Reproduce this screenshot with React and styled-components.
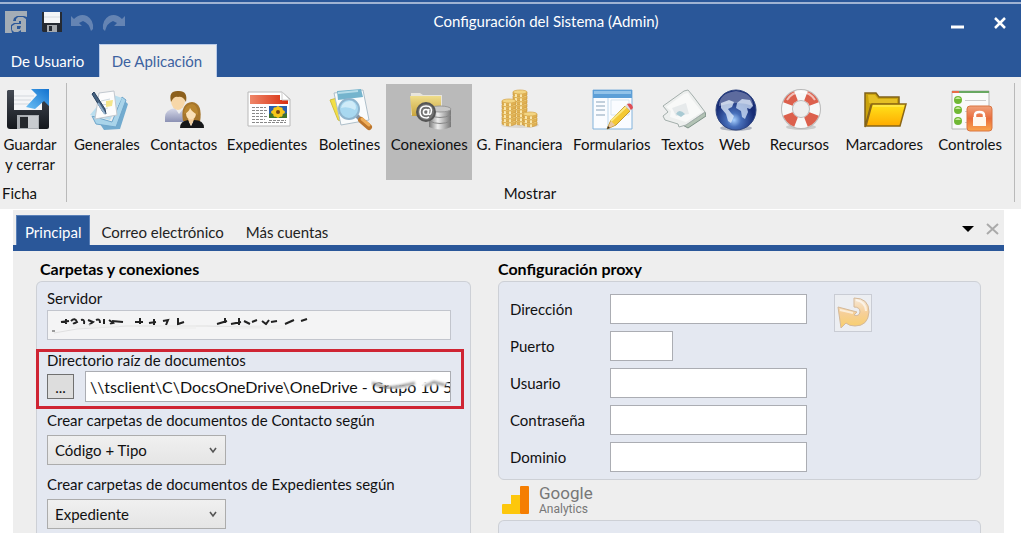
import React from "react";
import styled, { createGlobalStyle } from "styled-components";

const GlobalStyle = createGlobalStyle`
  *, *::before, *::after { box-sizing: border-box; }
  html, body, #root { margin: 0; }
  body { background: #fff; color: #111; font: 15px/16px Lato, "Open Sans", sans-serif; }
  button, input, select { font: inherit; color: inherit; border-radius: 0; margin: 0; }
  svg { display: block; flex: none; }
  h1, h2 { margin: 0; }
`;

const blue = "#2a5799";

const Page = styled.div`
  min-height: 100vh;
  display: flex;
  flex-direction: column;
  overflow: hidden;
`;

/* ---------- window header ---------- */
const Header = styled.header`
  background: ${blue};
  color: #fff;
  padding-top: 2px;
`;
const TitleBar = styled.div`
  display: flex;
  border-top: 2px solid #9fb3d3;
  height: 42px;
`;
const QuickTools = styled.div`
  display: flex;
  align-items: center;
  gap: 8px;
  width: 143px;
  padding: 0 0 4px 4px;
`;
const IconButton = styled.button`
  display: grid;
  place-items: center;
  padding: 0;
  border: 0;
  background: none;
`;
const SaveButton = styled(IconButton)`
  margin-left: 6px;
`;
const Title = styled.h1`
  flex: 1;
  text-align: center;
  font-size: 15px;
  font-weight: 400;
  line-height: 20px;
  padding-top: 7px;
`;
const WindowButtons = styled.div`
  display: flex;
  justify-content: flex-end;
  align-items: center;
  gap: 30px;
  width: 72px;
  padding: 0 15px 3px 0;
`;
const RibbonTabs = styled.nav`
  display: flex;
  height: 33px;
`;
const RibbonTab = styled.button`
  width: ${(p) => (p.$active ? 118 : 99)}px;
  padding: 0 ${(p) => (p.$active ? 2 : 4)}px 0 0;
  border: solid ${(p) => (p.$active ? "#b9cbe8" : "transparent")};
  border-width: 1px 1px 0;
  background: ${(p) => (p.$active ? "#eee" : "transparent")};
  color: ${(p) => (p.$active ? "#3d62a0" : "#fff")};
`;

/* ---------- ribbon ---------- */
const Ribbon = styled.section`
  display: flex;
  background: #eee;
  height: 132px;
  padding: 6px 6px 7px 0;
`;
const Group = styled.div`
  display: flex;
  flex-direction: column;
  justify-content: space-between;
  flex: ${(p) => (p.$wide ? "1" : "0 0 66px")};
  border-right: 1px solid #b9b9b9;
  padding: ${(p) => (p.$wide ? "1px 4px 0 1px" : "1px 6px 0 0")};
`;
const GroupName = styled.span`
  text-align: ${(p) => p.$align || "center"};
  padding: 0 20px 1px 2px;
`;
const Tools = styled.div`
  display: grid;
  grid-template-columns: 78fr 76fr 91fr 74fr 86fr 95fr 90fr 52fr 52fr 78fr 92fr 80fr;
`;
const Tool = styled.button`
  display: flex;
  flex-direction: column;
  align-items: center;
  gap: 2px;
  min-width: 0;
  height: 96px;
  padding: 4px 0 0;
  border: 0;
  background: ${(p) => (p.$active ? "#bababa" : "transparent")};
  line-height: 20px;
  white-space: nowrap;
  svg { margin-left: 3px; }
`;
const SaveTool = styled(Tool)`
  svg { margin-left: 0; margin-right: 4px; }
`;
const SaveLabel = styled.span`
  white-space: normal;
  width: 60px;
`;

/* ---------- document area ---------- */
const Workspace = styled.main`
  flex: 1;
  display: flex;
  flex-direction: column;
  margin: 1px 17px 0 13px;
  background: #eee;
`;
const PageTabs = styled.nav`
  display: flex;
  align-items: stretch;
  height: 41px;
  padding: 5px 5px 0 3px;
  border-bottom: 6px solid ${blue};
`;
const PageTab = styled.button`
  padding: 2px ${(p) => (p.$active ? 8 : 10)}px 0;
  border: 1px solid ${(p) => (p.$active ? "#5a80b8" : "transparent")};
  border-bottom: 0;
  background: ${(p) => (p.$active ? blue : "transparent")};
  color: ${(p) => (p.$active ? "#fff" : "#222")};
`;
const TabActions = styled.div`
  display: flex;
  align-items: center;
  gap: 12px;
  margin-left: auto;
  padding-bottom: 3px;
`;
const Columns = styled.div`
  flex: 1;
  display: grid;
  grid-template-columns: 435fr 483fr;
  gap: 27px;
  padding: 8px 23px 0;
`;
const Column = styled.section`
  display: flex;
  flex-direction: column;
  min-width: 0;
`;
const Heading = styled.h2`
  font-size: 16px;
  font-weight: 700;
  line-height: 20px;
  color: #000;
  padding: 0 0 2px ${(p) => p.$indent || 0}px;
`;
const Panel = styled.div`
  background: #e4e8f1;
  border: 1px solid #cdd0d6;
  border-radius: 6px;
  ${(p) => p.$open && "border-bottom: 0; border-radius: 6px 6px 0 0; flex: 1;"}
`;
const FolderPanel = styled(Panel)`
  padding: 8px 19px 4px 10px;
`;
const Field = styled.div`
  display: flex;
  flex-direction: column;
  gap: ${(p) => p.$gap || 7}px;
  margin-bottom: ${(p) => p.$after || 0}px;
`;
const Highlight = styled(Field)`
  margin: 0 -13px 3px -11px;
  padding: 0 10px 4px 8px;
  border: 3px solid #cf2433;
`;
const InputHolder = styled.div`
  position: relative;
  flex: 1;
  display: flex;
`;
const TextInput = styled.input`
  width: ${(p) => (p.$short ? "63px" : "100%")};
  min-width: 0;
  height: ${(p) => (p.$tall ? 31 : 30)}px;
  padding: 0 0 0 4px;
  border: 1px solid ${(p) => (p.$muted ? "#c2c5cd" : "#abadb3")};
  background: ${(p) => (p.$muted ? "#f4f4f5" : "#fff")};
  font-size: ${(p) => (p.$tall ? 16 : 15)}px;
  line-height: 20px;
`;
const Smudge = styled.svg`
  position: absolute;
  left: ${(p) => p.$left}px;
  top: 3px;
`;
const PathRow = styled.div`
  display: flex;
  align-items: center;
  gap: 11px;
`;
const BrowseButton = styled.button`
  width: 27px;
  height: 25px;
  padding: 0;
  border: 1px solid #707070;
  background: #ddd;
`;
const SelectHolder = styled.div`
  position: relative;
  width: 179px;
  svg { position: absolute; right: 9px; top: 12px; pointer-events: none; }
`;
const Select = styled.select`
  appearance: none;
  width: 100%;
  height: 30px;
  padding: 0 24px 0 7px;
  border: 1px solid #acacac;
  background: linear-gradient(#f0f0f0, #e5e5e5);
  line-height: 22px;
`;
const ProxyPanel = styled(Panel)`
  display: flex;
  align-items: flex-start;
  gap: 27px;
  padding: 12px 11px 7px;
`;
const ProxyFields = styled.div`
  display: flex;
  flex-direction: column;
  gap: 7px;
  width: 297px;
`;
const ProxyRow = styled.div`
  display: grid;
  grid-template-columns: 100px 1fr;
  align-items: center;
`;
const ResetButton = styled.button`
  display: grid;
  place-items: center;
  width: 38px;
  height: 38px;
  padding: 0;
  border: 1px solid #c9ccd4;
  background: #eceef2;
`;
const Analytics = styled.div`
  display: flex;
  align-items: center;
  gap: 10px;
  height: 40px;
  padding-left: 4px;
  color: #777;
  font-family: Roboto, sans-serif;
`;
const Brand = styled.div`
  display: flex;
  flex-direction: column;
  font-size: 12px;
  line-height: 14px;
`;
const BrandName = styled.span`
  font-size: 17px;
  line-height: 18px;
`;

/* ---------- icons ---------- */
const Ico = ({ children }) => (
  <svg width="44" height="44" viewBox="0 0 44 44" aria-hidden="true">{children}</svg>
);

const SaveCloseIcon = () => (
  <Ico>
    <defs>
      <linearGradient id="sv" x1="0" y1="0" x2="0" y2="1"><stop offset="0" stopColor="#454b55" /><stop offset="1" stopColor="#14171c" /></linearGradient>
      <linearGradient id="ar" x1="0" y1="1" x2="1" y2="0"><stop offset="0" stopColor="#6cc0f5" /><stop offset="1" stopColor="#1272cf" /></linearGradient>
    </defs>
    <path d="M2 2H41Q43 2 43 4V39Q43 41 41 41H4Q1 41 1 38V3Z" fill="url(#sv)" />
    <path d="M8 2H36V22H8Z" fill="#f4f5f7" />
    <path d="M8 8H28M8 12H25M8 16H34" stroke="#d3d7dd" />
    <path d="M11 27H33V41H11Z" fill="#a9adb2" /><path d="M14 29H22V40H14Z" fill="#25282d" /><path d="M22 28H32V40H22Z" fill="#c8cbcf" />
    <path d="M20 19L31 7L25 1H43V18L38 13L29 21Z" fill="url(#ar)" />
  </Ico>
);
const GeneralIcon = () => (
  <Ico>
    <path d="M12 33L28 37L39 13L42 16L34 41L18 42Z" fill="#72abcf" />
    <path d="M6 28L26 34L36 9L40 12L30 39L10 36Z" fill="#a9d4ea" stroke="#6fa6cb" />
    <path d="M4 27L24 32L36 10L22 5Z" fill="#b9deef" />
    <path d="M13 5L28 3L31 27L9 31Z" fill="#fcfcfc" stroke="#c2c8cf" />
    <path d="M15 13L24 11M15 17L24 16M15 21L22 20" stroke="#ccd7df" />
    <path d="M20 13L27 12L26 18L20 19Z" fill="#f4e58a" />
    <path d="M6 6L17 24L20 26L19 21L8 4Z" fill="#45617f" stroke="#263f5d" />
    <path d="M12 15L19 26" stroke="#93b1cd" strokeWidth="2" />
  </Ico>
);
const ContactsIcon = () => (
  <Ico>
    <defs><linearGradient id="shirt" x1="0" y1="0" x2="0" y2="1"><stop stopColor="#d8dbea" /><stop offset="1" stopColor="#8b91b4" /></linearGradient></defs>
    <path d="M2 34V29Q2 22 12 20L16 26L21 20Q28 21 29 27V34Z" fill="url(#shirt)" />
    <ellipse cx="15" cy="13" rx="7" ry="9" fill="#f7d7a8" />
    <path d="M8 14Q5 2 16 3Q25 3 23 14Q20 8 15 9Q11 8 8 14Z" fill="#8c601d" />
    <path d="M20 33Q17 15 29 14Q40 15 37 34Z" fill="#a6762c" />
    <ellipse cx="28" cy="25" rx="5" ry="7" fill="#fae0b6" />
    <path d="M21 26Q21 17 29 16Q35 17 35 27Q29 24 27 20Q26 24 21 26Z" fill="#b98630" />
    <path d="M17 40Q17 33 25 32L28 38L31 32Q41 32 41 40Z" fill="#17181a" />
    <path d="M25 31L28 38L31 31Z" fill="#f6d2a1" />
  </Ico>
);
const RecordsIcon = () => (
  <Ico>
    <defs><linearGradient id="rd" x1="0" y1="0" x2="1" y2="0"><stop stopColor="#ef8668" /><stop offset="1" stopColor="#d82e10" /></linearGradient></defs>
    <path d="M1 4H35L43 11V38H1Z" fill="#fff" stroke="#b8b8b8" />
    <path d="M3 7H33V12H41V16H3Z" fill="url(#rd)" /><path d="M35 4V12H43Z" fill="#fff" stroke="#ccc" />
    <path d="M5 19.5H19M5 22.5H20M5 25.5H18M5 28.5H20M5 31.5H18M5 34.5H39M22 32.5H39" stroke="#888" strokeDasharray="3 1" />
    <path d="M22 18H40V30H22Z" fill="#285fae" /><path d="M22 26L28 24L34 27L40 25V30H22Z" fill="#42752b" />
    <g fill="#f6c719"><ellipse cx="31" cy="24" rx="7" ry="3" /><ellipse cx="31" cy="24" rx="3" ry="6" /><ellipse cx="31" cy="24" rx="6" ry="3" transform="rotate(45 31 24)" /><ellipse cx="31" cy="24" rx="6" ry="3" transform="rotate(-45 31 24)" /></g><circle cx="31" cy="24" r="2" fill="#774814" />
  </Ico>
);
const BulletinsIcon = () => (
  <Ico>
    <path d="M1 12L8 10L17 35L9 32Z" fill="#f2df46" stroke="#d1bf42" />
    <path d="M5 5L34 2L40 32L12 37Z" fill="#f9fbfc" stroke="#aebfca" />
    <path d="M8 3L32 1L34 9L9 12Z" fill="#75b4cd" /><path d="M9 5L29 3" stroke="#b6dce9" strokeWidth="2" />
    <path d="M27 27L33 33" stroke="#8a94a0" strokeWidth="4" />
    <path d="M32 32L40 39" stroke="#bd762c" strokeWidth="6" strokeLinecap="round" /><path d="M33 31L40 37" stroke="#efae5a" strokeWidth="3" strokeLinecap="round" />
    <circle cx="20" cy="21" r="10" fill="#a8d8f0" stroke="#8fb4cd" strokeWidth="2" />
    <path d="M12 20Q14 12 23 13Q29 17 26 22Q19 18 12 20Z" fill="#d8f0fa" opacity=".8" />
  </Ico>
);
const ConnectionsIcon = () => (
  <Ico>
    <defs>
      <linearGradient id="cf" x1="0" y1="0" x2="0" y2="1"><stop stopColor="#efdd8b" /><stop offset="1" stopColor="#caa53d" /></linearGradient>
      <linearGradient id="db"><stop stopColor="#777" /><stop offset=".4" stopColor="#eee" /><stop offset="1" stopColor="#777" /></linearGradient>
    </defs>
    <path d="M2 5H11L14 7H33V27H2Z" fill="#e8e5dc" /><path d="M1 8H32V28H3Z" fill="url(#cf)" />
    <path d="M20 21V39Q31 44 42 39V21Z" fill="url(#db)" /><ellipse cx="31" cy="21" rx="11" ry="3" fill="#c7c7c7" stroke="#999" />
    <path d="M20 27Q31 32 42 27M20 33Q31 38 42 33" fill="none" stroke="#888" />
    <circle cx="17" cy="24" r="9" fill="#737373" stroke="#555" strokeWidth="2" />
    <g fill="none" stroke="#fff" strokeWidth="1.5"><circle cx="17" cy="24" r="2.6" /><path d="M20 21L19 25Q20 28 22 25Q24 18 17 18Q11 18 11 24Q11 30 18 30L20 29" /></g>
  </Ico>
);
const Coins = ({ x, y, n }) => (
  <g>{Array.from({ length: n }, (_, i) => (
    <g key={i}><path d={`M${x} ${y + (n - i - 1) * 4}v3q7 4 14 0v-3Z`} fill="#e0b152" stroke="#c8943a" strokeWidth=".6" /><path d={`M${x + 3} ${y + (n - i) * 4 - 2}v3M${x + 8} ${y + (n - i) * 4 - 2}v3`} stroke="#f9e7ae" strokeWidth="2" /><ellipse cx={x + 7} cy={y + (n - i - 1) * 4} rx="7" ry="2" fill="#f3d583" stroke="#d6a548" strokeWidth=".7" /></g>
  ))}</g>
);
const FinanceIcon = () => (
  <Ico><ellipse cx="21" cy="37" rx="19" ry="3" fill="#c9c2b4" opacity=".5" /><Coins x={14} y={4} n={8} /><Coins x={3} y={13} n={6} /><Coins x={24} y={26} n={3} /></Ico>
);
const FormsIcon = () => (
  <Ico>
    <path d="M2 2H41V41H2Z" fill="#fafcff" stroke="#82b3dc" /><path d="M2 2H41V10H2Z" fill="#5d9fd7" /><path d="M3 3H40V6H3Z" fill="#93c3e9" />
    <path d="M17 10V40" stroke="#bcd6eb" /><path d="M20 12H38V27H20Z" fill="none" stroke="#d8e5f0" />
    <path d="M5 14H14M5 18H14M5 22H14M5 27H14" stroke="#8aa3b9" />
    <path d="M16 41L20 32L34 18L39 23L25 37Z" fill="#f4c934" stroke="#c3992e" /><path d="M20 33L35 19" stroke="#fbe985" strokeWidth="2" />
    <path d="M34 18L37 15L42 20L39 23Z" fill="#dedede" /><path d="M36 16Q41 14 42 20L40 22Z" fill="#df4d55" />
    <path d="M16 41L20 33L24 37Z" fill="#eac7a0" /><path d="M16 41L17 38L19 40Z" fill="#33291f" />
  </Ico>
);
const TextsIcon = () => (
  <Ico>
    <path d="M17 35L26 40L44 28L43 24L25 36Z" fill="#b2c2b4" stroke="#7d9187" />
    <path d="M1 18L22 3L26 2L31 8L43 24L24 37L17 39L16 36L3 32L1 28L6 24Z" fill="#edefee" stroke="#a3aeab" />
    <path d="M4 19L22 6L26 5L29 10L40 24L24 34L8 29L9 23Z" fill="#f8f9f8" />
    <path d="M10 20L24 15L27 26L14 28Z" fill="#e6eaeb" /><path d="M14 26Q17 20 23 26L19 29Z" fill="#a8cad3" />
  </Ico>
);
const WebIcon = () => (
  <Ico>
    <defs><radialGradient id="wb" cx=".45" cy=".75"><stop stopColor="#a7d0ff" /><stop offset=".35" stopColor="#476fba" /><stop offset="1" stopColor="#172c75" /></radialGradient></defs>
    <ellipse cx="22" cy="40" rx="16" ry="3" fill="#aeb4c0" />
    <circle cx="22" cy="22" r="20" fill="url(#wb)" stroke="#304680" />
    <path d="M7 15L15 12L20 14L18 19L14 21L17 25L20 28L17 35L14 33L12 26L7 20Z" fill="#dbe7f8" opacity=".8" />
    <path d="M23 15L28 11L36 12L39 18L36 21L33 20L34 24L31 31L28 29L27 23L22 20Z" fill="#cbdcf5" opacity=".8" />
    <path d="M5 18Q5 5 22 3Q39 5 39 18Q24 12 5 18Z" fill="#fff" opacity=".3" />
  </Ico>
);
const ResourcesIcon = () => (
  <Ico>
    <ellipse cx="22" cy="39" rx="15" ry="3" fill="#ccc" />
    <circle cx="22" cy="21" r="14" fill="none" stroke="#b9b9b9" strokeWidth="12" /><circle cx="22" cy="21" r="14" fill="none" stroke="#f7f7f7" strokeWidth="10" />
    <g fill="none" stroke="#dc604d" strokeWidth="10"><path d="M8.9 16A14 14 0 0 1 17 7.9M27 7.9A14 14 0 0 1 35.1 16M35.1 26A14 14 0 0 1 27 34.1M17 34.1A14 14 0 0 1 8.9 26" /></g>
    <path d="M8 12Q13 4 22 4Q31 4 36 12" fill="none" stroke="#fff" strokeWidth="2" opacity=".6" />
  </Ico>
);
const BookmarksIcon = () => (
  <Ico>
    <defs><linearGradient id="bk" x1="0" y1="0" x2="0" y2="1"><stop stopColor="#ffe41c" /><stop offset="1" stopColor="#ffab00" /></linearGradient></defs>
    <path d="M1 39V5H12L15 9H35V17H7Z" fill="#cba30b" stroke="#80621b" strokeWidth="1.5" />
    <path d="M4 7H11L14 11H33V15H5Z" fill="#e5bf25" />
    <path d="M8 16H42L36 38H2Z" fill="url(#bk)" stroke="#8b6717" strokeWidth="1.5" /><path d="M9 18H40" stroke="#fff06d" />
  </Ico>
);
const ControlsIcon = () => (
  <Ico>
    <defs><linearGradient id="lk" x1="0" y1="0" x2="0" y2="1"><stop stopColor="#f0a27c" /><stop offset=".5" stopColor="#e96d3c" /><stop offset="1" stopColor="#faa64b" /></linearGradient></defs>
    <path d="M2 3H39V41H2Z" fill="#fafafa" stroke="#b7b7b7" /><path d="M2 3H39V5H2Z" fill="#69a862" /><path d="M2 3H9V5H2Z" fill="#e86c48" />
    <path d="M15 12.5H36M15 23.5H30M15 34.5H30" stroke="#ccc" />
    {[12, 22, 33].map((y) => <g key={y}><circle cx="8" cy={y} r="4" fill="#70b834" /><path d={`M5 ${y - 1}Q8 ${y - 5} 11 ${y - 1}Z`} fill="#c5e998" /></g>)}
    <rect x="17" y="18" width="25" height="25" rx="3" fill="url(#lk)" stroke="#da7442" />
    <path d="M25 29V27Q25 24 29.500 24Q34 24 34 27V29" fill="none" stroke="#fff" strokeWidth="2.500" /><path d="M23 29H36V38H23Z" fill="#fff8ed" />
  </Ico>
);

const AppLogo = () => (
  <svg width="23" height="23" viewBox="0 0 23 23" aria-hidden="true">
    <path d="M1 0H23V6L20 5H13L10 7L9 10H15V12H10L7 14V18L8 22H1Z" fill="#a4adb6" />
    <path d="M12 8L14 6H19L22 8V21H17V19L14 21H10L8 19V15L11 13H17V10H12ZM13 15V18H16L17 15Z" fill="#a4adb6" fillRule="evenodd" />
  </svg>
);
const SmallSaveIcon = () => (
  <svg width="22" height="22" viewBox="0 0 22 22" aria-hidden="true">
    <path d="M1 1H21V21H2L1 20Z" fill="#252a32" /><path d="M3 1H19V12H3Z" fill="#f3f5f7" /><path d="M3 6H19" stroke="#d5dae0" /><path d="M6 14H16V21H6Z" fill="#a5a9ae" /><path d="M8 15H11V20H8Z" fill="#252a32" />
  </svg>
);
const UndoIcon = ({ flip }) => (
  <svg width="23" height="20" viewBox="0 0 23 20" aria-hidden="true">
    <path transform={flip ? "translate(23 0) scale(-1 1)" : undefined} d="M0 14V4L3 7Q9 1 16 4Q23 8 22 17L20 19Q18 11 12 9L8 11L11 14Z" fill="#6584b3" />
  </svg>
);
const Chevron = () => (
  <svg width="8" height="7" viewBox="0 0 8 7" aria-hidden="true"><path d="M1 1L4 5L7 1" fill="none" stroke="#555" strokeWidth="1.6" /></svg>
);
const ResetIcon = () => (
  <svg width="34" height="32" viewBox="0 0 34 32" aria-hidden="true">
    <defs><linearGradient id="rs" x1="0" y1="0" x2="0" y2="1"><stop stopColor="#f6e9d8" /><stop offset=".5" stopColor="#f6cf98" /><stop offset="1" stopColor="#f8cf6b" /></linearGradient></defs>
    <path d="M18 1Q33 1 33 15Q32 29 19 29Q13 29 10 26L5 31L2 10L21 15L18 18Q23 20 24 15Q24 10 18 10Z" fill="url(#rs)" stroke="#d4b99a" />
    <path d="M4 13L17 16M20 3Q30 5 30 14" fill="none" stroke="#fff" opacity=".6" strokeWidth="2" />
  </svg>
);
const AnalyticsLogo = () => (
  <svg width="27" height="28" viewBox="0 0 27 28" aria-hidden="true">
    <path d="M1 18H9V9H18V28H1Q0 28 0 27V19Q0 18 1 18Z" fill="#fdc70c" /><rect x="18" width="9" height="28" rx="1" fill="#f57e02" />
  </svg>
);
const ServerSmudge = () => (
  <Smudge $left={4} width="264" height="23" viewBox="0 0 264 23" aria-hidden="true">
    <defs><filter id="soft"><feGaussianBlur stdDeviation=".7" /></filter></defs>
    <g fill="none" stroke="#222" strokeWidth="2" filter="url(#soft)">
      <path d="M10 9L18 8M15 6V11M20 8Q24 4 26 9L22 11M30 7Q34 6 33 11M37 7L42 9L38 12M45 7Q49 5 49 10M53 6V11M58 7L62 10L59 11M61 8L72 9" />
      <path d="M84 9H92M89 5V11M98 10L105 9M103 6V12M112 8L117 7L115 12M127 5V11L133 9" />
      <path d="M166 11L176 8M174 5V10M180 11L190 9M188 5V12M193 8L199 11M201 9L206 7M211 8L215 11L218 7M220 9L226 8M234 11L243 7M250 8L256 6" />
    </g>
    <path d="M3 20L26 16L75 13H155L210 14" fill="none" stroke="#ccc" opacity=".5" /><path d="M1 18L4 18" stroke="#444" />
    <path d="M18 13H68M110 14H145M180 14H235" stroke="#eee" strokeWidth="4" opacity=".6" />
  </Smudge>
);
const PathSmudge = () => (
  <Smudge $left={286} width="78" height="25" viewBox="0 0 78 25" aria-hidden="true">
    <defs><filter id="soft2"><feGaussianBlur stdDeviation="1.2" /></filter></defs>
    <g filter="url(#soft2)"><path d="M0 8Q8 3 20 10T40 8L52 10L76 8" fill="none" stroke="#fff" strokeWidth="5" /><path d="M1 9L16 14L31 12L44 9M54 12L63 8L74 11" fill="none" stroke="#777" strokeWidth="3" opacity=".7" /></g>
  </Smudge>
);

const tools = [
  ["Generales", GeneralIcon], ["Contactos", ContactsIcon], ["Expedientes", RecordsIcon],
  ["Boletines", BulletinsIcon], ["Conexiones", ConnectionsIcon], ["G. Financiera", FinanceIcon],
  ["Formularios", FormsIcon], ["Textos", TextsIcon], ["Web", WebIcon],
  ["Recursos", ResourcesIcon], ["Marcadores", BookmarksIcon], ["Controles", ControlsIcon],
];
const proxyFields = [
  ["direccion", "Dirección"], ["puerto", "Puerto"], ["usuario", "Usuario"],
  ["contrasena", "Contraseña"], ["dominio", "Dominio"],
];

function Dropdown({ id, option }) {
  return (
    <SelectHolder>
      <Select id={id} defaultValue={option}><option>{option}</option></Select>
      <Chevron />
    </SelectHolder>
  );
}

export default function App() {
  return (
    <Page>
      <GlobalStyle />
      <Header>
        <TitleBar>
          <QuickTools>
            <AppLogo />
            <SaveButton aria-label="Guardar"><SmallSaveIcon /></SaveButton>
            <IconButton aria-label="Deshacer"><UndoIcon /></IconButton>
            <IconButton aria-label="Rehacer"><UndoIcon flip /></IconButton>
          </QuickTools>
          <Title>Configuración del Sistema (Admin)</Title>
          <WindowButtons>
            <IconButton aria-label="Minimizar"><svg width="13" height="12" viewBox="0 0 13 12"><path d="M0 10H13" stroke="#fff" strokeWidth="3" /></svg></IconButton>
            <IconButton aria-label="Cerrar"><svg width="12" height="12" viewBox="0 0 12 12"><path d="M1 1L11 11M11 1L1 11" stroke="#fff" strokeWidth="2.500" /></svg></IconButton>
          </WindowButtons>
        </TitleBar>
        <RibbonTabs>
          <RibbonTab>De Usuario</RibbonTab>
          <RibbonTab $active>De Aplicación</RibbonTab>
        </RibbonTabs>
      </Header>

      <Ribbon>
        <Group>
          <SaveTool><SaveCloseIcon /><SaveLabel>Guardar y cerrar</SaveLabel></SaveTool>
          <GroupName $align="left">Ficha</GroupName>
        </Group>
        <Group $wide>
          <Tools>
            {tools.map(([name, Icon]) => (
              <Tool key={name} $active={name === "Conexiones"}><Icon />{name}</Tool>
            ))}
          </Tools>
          <GroupName>Mostrar</GroupName>
        </Group>
      </Ribbon>

      <Workspace>
        <PageTabs>
          <PageTab $active>Principal</PageTab>
          <PageTab>Correo electrónico</PageTab>
          <PageTab>Más cuentas</PageTab>
          <TabActions>
            <IconButton aria-label="Lista de pestañas"><svg width="12" height="6" viewBox="0 0 12 6"><path d="M0 0H12L6 6Z" fill="#000" /></svg></IconButton>
            <IconButton aria-label="Cerrar pestaña"><svg width="13" height="12" viewBox="0 0 13 12"><path d="M1 1L12 11M12 1L1 11" stroke="#aaa" strokeWidth="2" /></svg></IconButton>
          </TabActions>
        </PageTabs>

        <Columns>
          <Column>
            <Heading $indent={4}>Carpetas y conexiones</Heading>
            <FolderPanel $open>
              <Field $gap={4} $after={9}>
                <label htmlFor="servidor">Servidor</label>
                <InputHolder><TextInput id="servidor" $muted readOnly /><ServerSmudge /></InputHolder>
              </Field>
              <Highlight $gap={3}>
                <label htmlFor="directorio">Directorio raíz de documentos</label>
                <PathRow>
                  <BrowseButton aria-label="Examinar">...</BrowseButton>
                  <InputHolder>
                    <TextInput id="directorio" $tall defaultValue={"\\\\tsclient\\C\\DocsOneDrive\\OneDrive - Grupo 10 5"} />
                    <PathSmudge />
                  </InputHolder>
                </PathRow>
              </Highlight>
              <Field $after={11}>
                <label htmlFor="contacto">Crear carpetas de documentos de Contacto según</label>
                <Dropdown id="contacto" option="Código + Tipo" />
              </Field>
              <Field>
                <label htmlFor="expediente">Crear carpetas de documentos de Expedientes según</label>
                <Dropdown id="expediente" option="Expediente" />
              </Field>
            </FolderPanel>
          </Column>

          <Column>
            <Heading>Configuración proxy</Heading>
            <ProxyPanel>
              <ProxyFields>
                {proxyFields.map(([id, label]) => (
                  <ProxyRow key={id}>
                    <label htmlFor={id}>{label}</label>
                    <TextInput id={id} type={id === "contrasena" ? "password" : "text"} $short={id === "puerto"} />
                  </ProxyRow>
                ))}
              </ProxyFields>
              <ResetButton aria-label="Restablecer"><ResetIcon /></ResetButton>
            </ProxyPanel>
            <Analytics>
              <AnalyticsLogo />
              <Brand><BrandName>Google</BrandName>Analytics</Brand>
            </Analytics>
            <Panel $open />
          </Column>
        </Columns>
      </Workspace>
    </Page>
  );
}
